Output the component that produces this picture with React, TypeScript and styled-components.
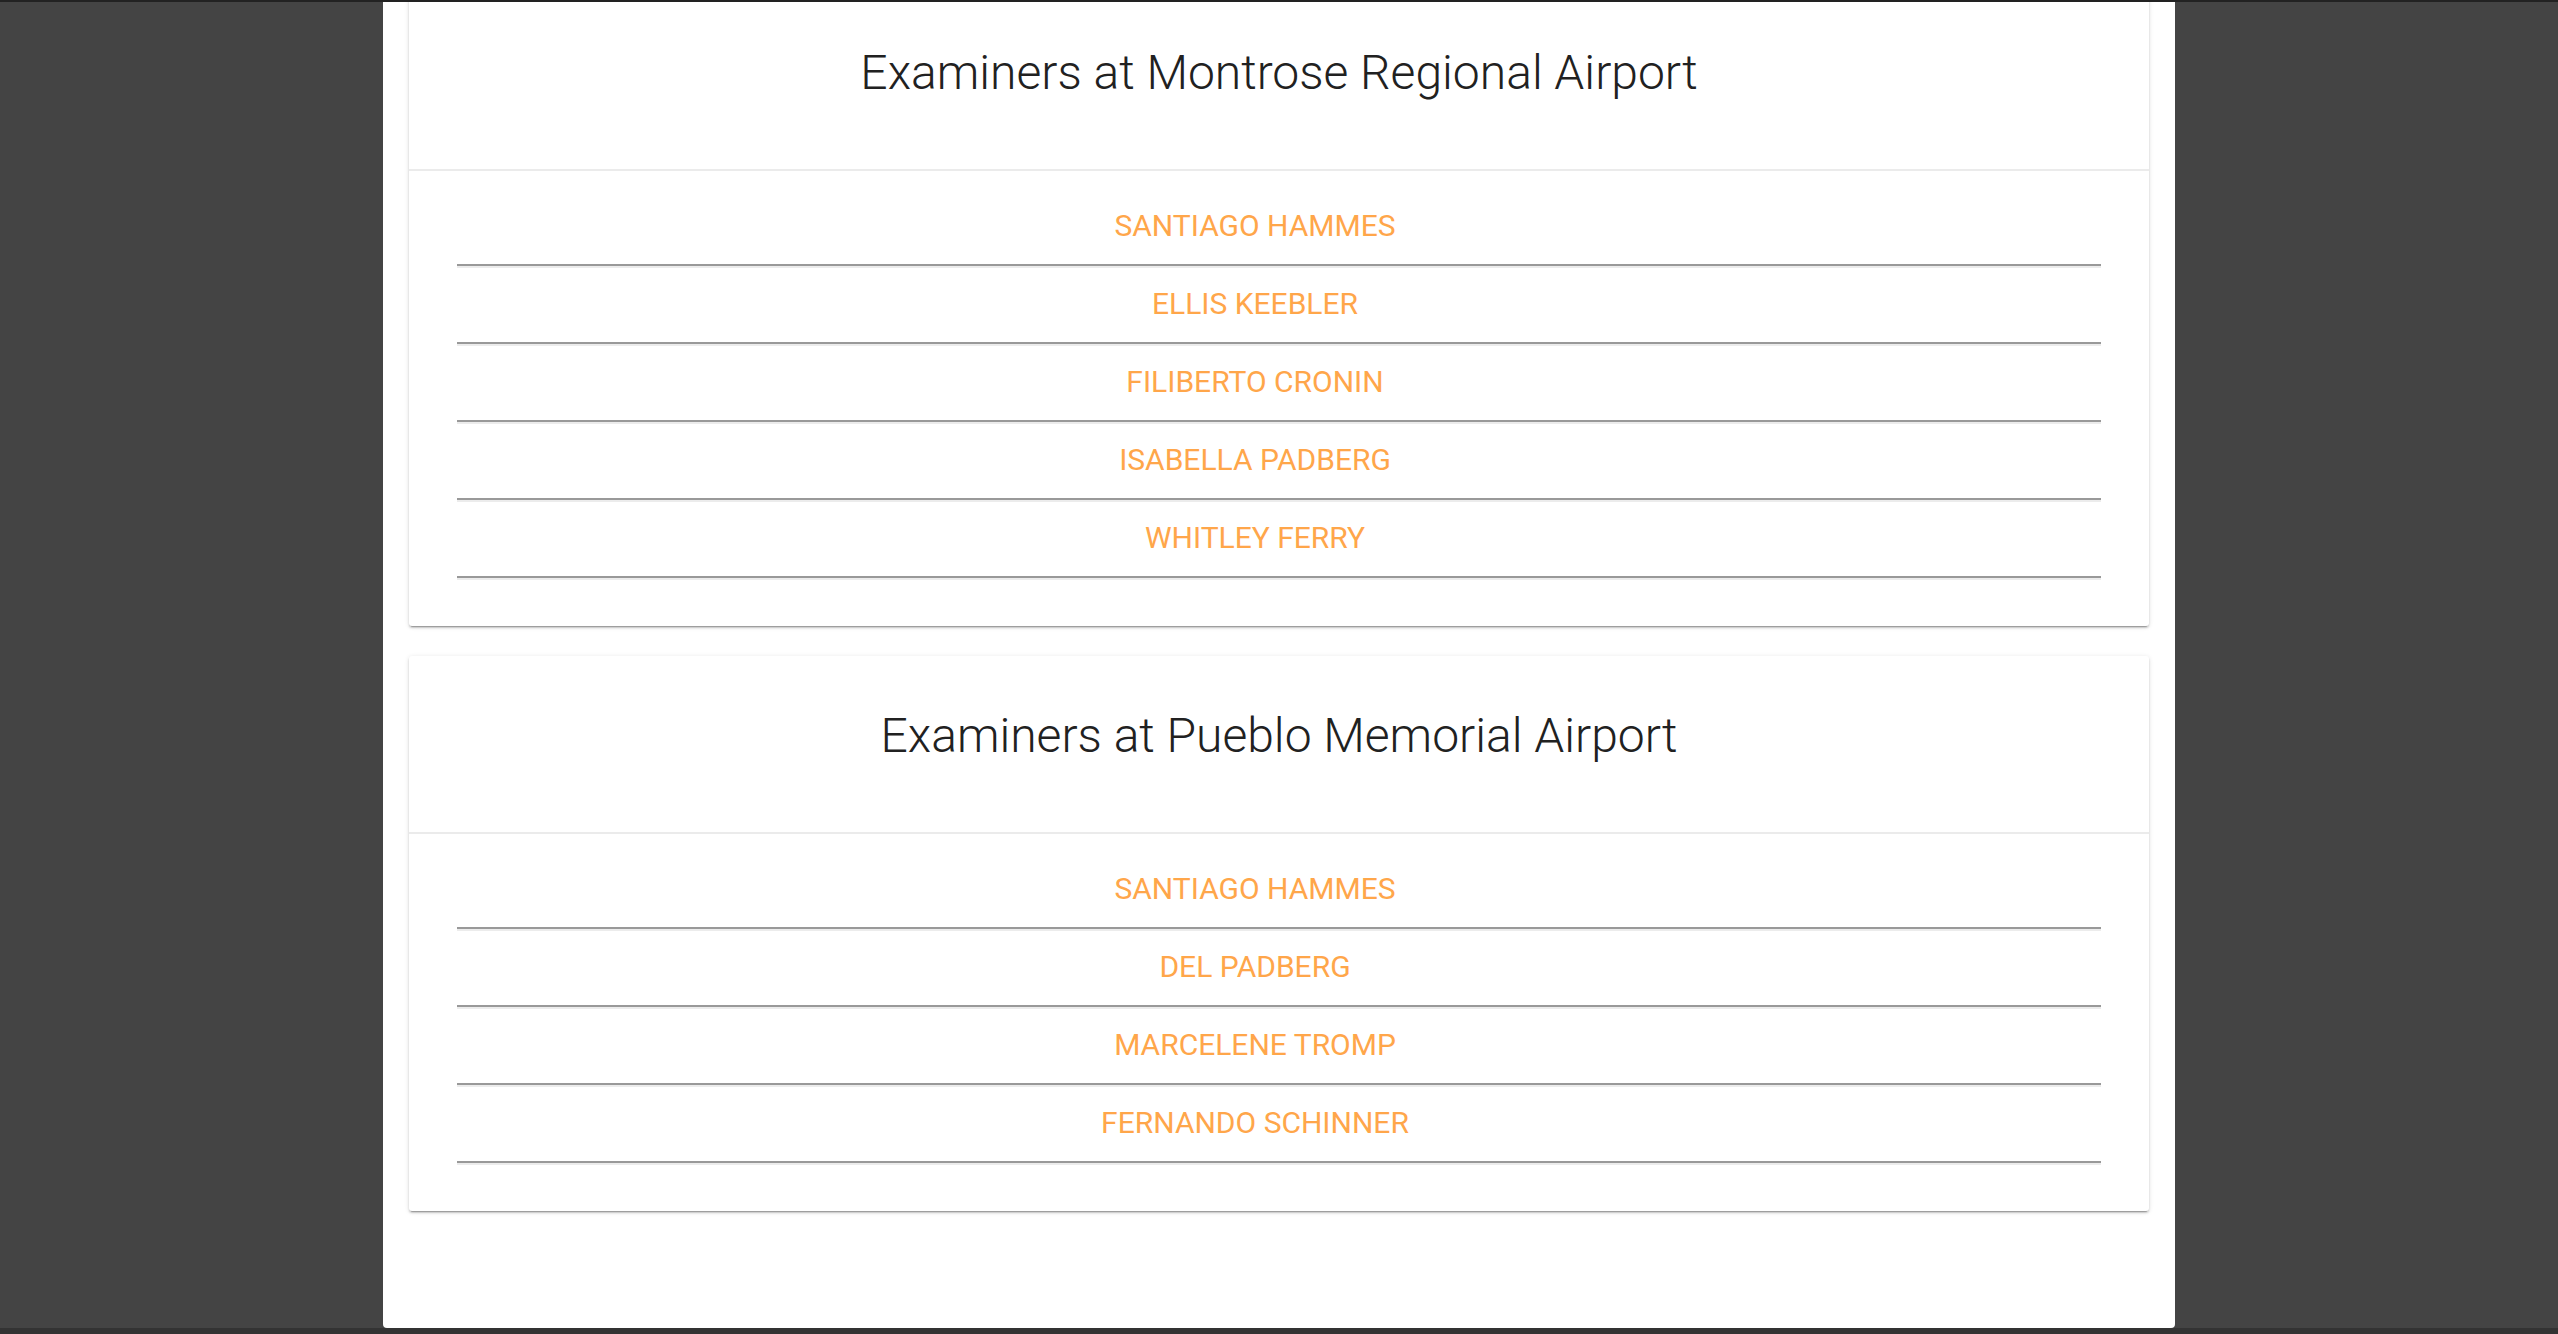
import React from "react";
import styled, { createGlobalStyle } from "styled-components";

const GlobalStyle = createGlobalStyle`
  html, body {
    margin: 0;
    padding: 0;
    background: #444444;
    overflow: hidden;
  }
  * { box-sizing: border-box; }
`;

const Page = styled.div`
  display: flex;
  flex-direction: column;
  height: 1334px;
  background: #444444;
  border-top: 2px solid #222222;
  font-family: Roboto, "Liberation Sans", sans-serif;
`;

const Panel = styled.main`
  width: 1792px;
  height: 1326px;
  margin: 0 auto;
  background: #ffffff;
  border-radius: 0 0 4px 4px;
  overflow: hidden;
  padding: 0 26px;
  display: flex;
  flex-direction: column;
  gap: 30px;
`;

const BottomStrip = styled.div`
  flex: 1;
  background: #333333;
`;

const Card = styled.section<{ $first?: boolean }>`
  background: #ffffff;
  border-radius: 3px;
  margin-top: ${(p) => (p.$first ? "-9px" : "0")};
  box-shadow: 0 2px 2px 0 rgba(0, 0, 0, 0.16), 0 3px 1px -2px rgba(0, 0, 0, 0.24),
    0 1px 5px 0 rgba(0, 0, 0, 0.12);
  flex-shrink: 0;
`;

const CardHeader = styled.header`
  padding: 50px 24px 67px;
  border-bottom: 2px solid #ebebeb;
  text-align: center;
`;

const Title = styled.h2`
  margin: 0;
  font-family: Roboto, "Liberation Sans", sans-serif;
  font-weight: 300;
  font-size: 48px;
  line-height: 59px;
  color: #212121;
`;

const List = styled.ul`
  list-style: none;
  margin: 0;
  padding: 19px 48px 46px;
`;

const Item = styled.li`
  border-bottom: 2px solid #999999;
  box-shadow: 0 2px 0 0 #ececec;
  margin-bottom: 2px;
`;

const ItemLink = styled.a`
  display: block;
  padding: 19px 48px 22px 0;
  text-align: center;
  font-family: Roboto, "Liberation Sans", sans-serif;
  font-weight: 400;
  font-size: 30px;
  line-height: 33px;
  color: #ffa64a;
  text-transform: uppercase;
  text-decoration: none;
  cursor: pointer;
`;

type Airport = { name: string; examiners: string[] };

const airports: Airport[] = [
  {
    name: "Montrose Regional Airport",
    examiners: [
      "Santiago Hammes",
      "Ellis Keebler",
      "Filiberto Cronin",
      "Isabella Padberg",
      "Whitley Ferry",
    ],
  },
  {
    name: "Pueblo Memorial Airport",
    examiners: [
      "Santiago Hammes",
      "Del Padberg",
      "Marcelene Tromp",
      "Fernando Schinner",
    ],
  },
];

export default function App() {
  return (
    <>
      <GlobalStyle />
      <Page>
        <Panel>
          {airports.map((a, i) => (
            <Card key={a.name} $first={i === 0}>
              <CardHeader>
                <Title>Examiners at {a.name}</Title>
              </CardHeader>
              <List>
                {a.examiners.map((e) => (
                  <Item key={e}>
                    <ItemLink>{e.toUpperCase()}</ItemLink>
                  </Item>
                ))}
              </List>
            </Card>
          ))}
        </Panel>
        <BottomStrip />
      </Page>
    </>
  );
}
